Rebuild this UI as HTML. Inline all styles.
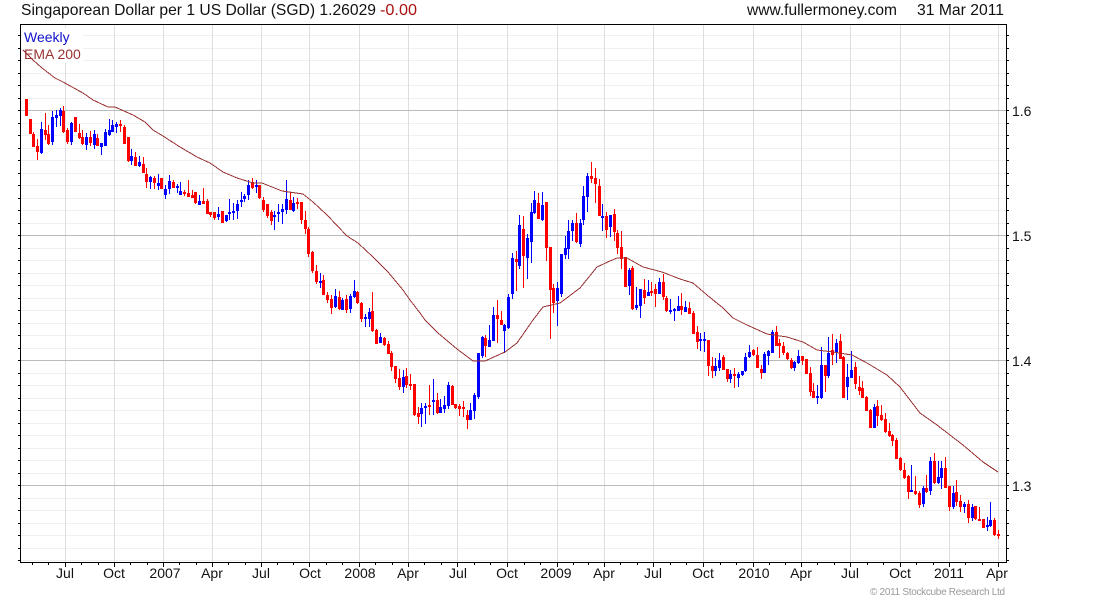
<!DOCTYPE html>
<html><head><meta charset="utf-8"><title>SGD chart</title>
<style>
html,body{margin:0;padding:0;background:#fff;width:1100px;height:600px;overflow:hidden}
svg{display:block;font-family:"Liberation Sans",Arial,sans-serif}
</style></head><body>
<svg id="c" xmlns="http://www.w3.org/2000/svg" width="1100" height="600" viewBox="0 0 1100 600">
<g id="grid" shape-rendering="crispEdges"></g>
<rect x="22" y="28" width="61" height="35" fill="#fff"/>
<g id="candles" shape-rendering="crispEdges"></g>
<polyline fill="none" stroke="#993333" stroke-width="1" shape-rendering="crispEdges" points="23,50 33,60 42,68 55,78 63,82 72,87 83,93 93,100 108,107 115,107 133,115 145,122 153,130 163,136 180,147 197,157 210,163 223,172 237,178 253,183 262,183 282,191 303,194 313,202 327,215 347,236 358,243 373,257 388,272 403,290 410,300 420,313 425,320 438,333 457,349 473,361 485,361 505,352 517,343 533,320 543,307 560,303 580,288 597,267 610,261 617,258 627,258 643,267 662,272 680,279 693,283 707,295 723,308 733,318 747,325 767,334 787,337 803,342 817,350 833,352 852,355 867,363 887,375 900,387 920,413 937,425 950,435 963,445 983,462 998,472"/>
<g id="frame" shape-rendering="crispEdges"></g>
<text x="21" y="15" font-size="16" fill="#111" textLength="355" lengthAdjust="spacingAndGlyphs">Singaporean Dollar per 1 US Dollar (SGD) 1.26029</text>
<text x="380" y="15" font-size="16" fill="#aa1111" textLength="37" lengthAdjust="spacingAndGlyphs">-0.00</text>
<text x="747" y="15" font-size="16" fill="#111" textLength="150" lengthAdjust="spacingAndGlyphs">www.fullermoney.com</text>
<text x="917" y="15" font-size="16" fill="#111" textLength="87" lengthAdjust="spacingAndGlyphs">31 Mar 2011</text>
<text x="24" y="42" font-size="14" fill="#1111cc">Weekly</text>
<text x="24" y="59" font-size="14" fill="#993333">EMA 200</text>
<g font-size="14" fill="#111">
<text x="1012" y="116">1.6</text><text x="1012" y="241">1.5</text><text x="1012" y="366">1.4</text><text x="1012" y="491">1.3</text>
</g>
<g font-size="14" fill="#111" text-anchor="middle">
<text x="65" y="578">Jul</text><text x="114" y="578">Oct</text><text x="165" y="578">2007</text><text x="212" y="578">Apr</text><text x="261" y="578">Jul</text><text x="310" y="578">Oct</text><text x="360" y="578">2008</text><text x="408" y="578">Apr</text><text x="458" y="578">Jul</text><text x="507" y="578">Oct</text><text x="556" y="578">2009</text><text x="604" y="578">Apr</text><text x="653" y="578">Jul</text><text x="703" y="578">Oct</text><text x="754" y="578">2010</text><text x="801" y="578">Apr</text><text x="850" y="578">Jul</text><text x="900" y="578">Oct</text><text x="949" y="578">2011</text><text x="997" y="578">Apr</text>
</g>
<text x="870" y="595" font-size="10" fill="#999" textLength="135">© 2011 Stockcube Research Ltd</text>
</svg>
<script>
var D="r99,99,116,116 r119,119,134,134 r132,134,147,147 r139,146,152,160 b122,129,153,154 r113,130,135,140 r125,134,144,145 b111,117,142,145 b110,115,118,127 b108,110,116,126 r106,111,132,133 r128,130,142,144 b122,123,142,145 r117,117,132,132 r124,133,138,139 r130,137,144,145 b133,137,145,150 r131,137,143,146 b130,134,145,149 r134,138,146,146 b143,143,147,155 b129,132,146,146 b119,130,135,136 b120,125,132,132 b122,124,127,133 r120,124,126,132 r125,127,144,144 r137,137,161,162 b149,156,161,165 r152,157,166,166 b156,162,166,167 r157,164,173,173 r168,174,182,188 b176,177,182,189 r176,178,183,189 b174,183,186,190 r178,178,189,189 b185,189,195,199 b175,181,189,194 r180,182,188,188 b184,186,188,193 b182,191,195,195 r190,192,194,196 r180,193,197,197 r190,195,198,198 r192,192,203,204 b195,201,205,205 r188,201,204,204 r199,201,214,214 r212,212,215,217 r212,212,218,220 b207,214,217,220 r211,211,223,223 b215,215,221,222 b199,212,214,220 b203,211,213,220 b200,204,211,219 b192,200,202,207 b194,196,199,202 b180,185,195,200 r178,182,188,189 b180,185,187,193 r185,185,198,199 r197,200,210,212 r204,204,216,218 r210,212,221,225 b211,215,217,230 b204,212,214,222 b204,209,212,224 b180,199,210,214 r192,200,210,210 b197,203,211,212 r198,202,204,209 r202,202,220,224 r211,220,229,234 r227,229,254,257 r251,252,271,273 r265,271,282,284 b273,281,283,288 r275,280,295,295 r292,295,300,303 r295,299,308,314 b289,296,307,308 r291,297,309,310 b298,300,310,310 r295,299,310,313 b294,296,309,313 b280,291,297,298 r291,292,303,304 r302,303,319,322 b314,317,319,327 b308,312,319,327 r292,311,331,332 r329,330,344,344 b333,337,343,343 r337,338,345,346 r341,344,354,354 r351,353,367,371 r366,366,379,383 r369,378,387,390 b370,377,387,393 r368,376,385,388 r374,384,386,390 r384,384,415,416 r407,413,417,424 b403,408,414,427 b403,406,408,424 r385,405,407,415 b379,400,402,415 r393,400,413,414 b399,407,413,413 b396,405,409,413 b382,385,406,409 r385,386,405,405 r404,404,408,409 r404,406,409,416 r401,407,408,417 r410,415,420,429 b403,410,420,420 b393,395,411,419 b353,353,397,399 b336,337,356,358 r335,338,346,357 b325,340,347,347 b307,315,341,341 r300,315,319,343 r311,320,325,325 b324,325,331,353 b294,297,328,329 b253,258,294,299 r251,259,262,291 b215,225,266,269 r216,229,256,288 b234,238,258,279 b203,212,242,263 b191,200,213,214 r193,203,219,219 b192,205,220,221 r202,202,248,261 r247,247,290,339 r284,288,303,313 b282,288,301,326 b254,254,294,297 b236,248,255,259 b220,231,249,259 b220,223,231,241 r213,223,242,243 b219,223,244,247 b186,196,220,225 b173,176,197,212 r162,176,179,183 r168,178,184,203 r179,186,216,216 b204,216,218,231 r212,216,230,238 b215,215,227,237 r209,214,232,241 r230,233,248,254 r231,247,259,269 r257,257,287,287 b268,270,286,295 r266,268,309,310 b287,305,308,310 b289,289,306,318 r279,290,298,304 b280,292,296,296 r282,291,293,296 r284,289,294,307 b278,282,294,294 r274,282,297,300 r296,298,311,312 b299,310,312,314 b308,309,311,321 b296,306,311,311 r293,306,310,315 b301,307,312,312 r302,308,314,314 r311,313,334,334 r326,332,342,349 b333,339,341,351 b332,339,341,352 r340,340,366,376 r357,366,371,378 b358,366,371,376 b353,360,368,371 r355,357,370,370 r369,369,379,382 b370,374,379,383 r368,374,376,388 b372,374,378,387 b371,371,375,376 b353,357,371,372 b345,352,357,358 r349,350,355,356 r347,355,368,368 r365,369,373,379 b352,354,373,373 b350,351,356,365 b330,332,353,353 r326,332,346,346 r339,343,346,358 r342,346,353,355 r352,353,359,360 r358,360,368,369 b361,362,368,371 b350,356,363,364 r356,356,361,365 r359,359,374,374 r367,373,392,396 r383,391,398,398 b385,396,398,404 b347,365,398,399 r365,365,376,392 b337,353,376,378 r334,350,355,365 b339,343,353,363 r334,341,359,359 r356,357,398,398 b364,377,387,400 b351,370,378,378 r362,367,384,389 r376,387,391,395 r381,388,398,398 r396,397,411,411 r409,410,428,428 b404,407,428,428 r400,406,416,426 r405,415,420,421 r413,419,432,433 r423,431,436,437 r434,435,441,446 r438,440,459,459 r457,458,470,471 r463,470,478,479 r475,476,492,499 b465,490,492,492 r476,491,494,495 r491,493,505,508 b486,488,504,507 r475,488,492,493 b457,461,491,495 r453,461,483,484 b461,477,483,484 b461,468,478,489 r457,468,488,488 r486,486,507,511 b486,493,507,509 r480,492,502,506 r495,501,507,512 b502,504,507,513 r500,504,518,523 b504,507,518,521 r506,506,519,520 r507,519,521,521 r519,519,528,528 b517,525,527,531 b502,520,526,527 r518,520,535,536 r530,534,536,539".split(" ");
var NS="http://www.w3.org/2000/svg";
function R(g,x,y,w,h,f){var r=document.createElementNS(NS,"rect");r.setAttribute("x",x);r.setAttribute("y",y);r.setAttribute("width",w);r.setAttribute("height",h);r.setAttribute("fill",f);g.appendChild(r);}
var G=document.getElementById("grid"),F=document.getElementById("frame"),C=document.getElementById("candles");
var i,y,k;
for(k=-6;k<=36;k++){
  y=Math.round(110+k*12.5);
  if(y<25||y>=563)continue;
  var isMaj=(y===110||y===235||y===360||y===485);
  if(!isMaj)R(G,21,y,985,1,"#f0f0f0");
  R(F,18,y,2,1,"#000");R(F,1007,y,2,1,"#000");
}
var V=[65,114,163,212,261,309,359,408,457,507,557,604,653,703,753,801,850,900,949,998];
V.forEach(function(x){R(G,x,25,1,538,"#dedede");R(F,x,563,1,4,"#000");});
[110,235,360,485].forEach(function(y){R(G,21,y,985,1,"#bbbbbb");});
for(i=0;i<V.length;i++){
  var a=i==0?16:V[i-1],b=V[i];
  if(i==0){R(F,32,563,1,2,"#000");R(F,48,563,1,2,"#000");continue;}
  R(F,Math.round(a+(b-a)/3),563,1,2,"#000");R(F,Math.round(a+2*(b-a)/3),563,1,2,"#000");
}
R(F,20,24,987,1,"#000");R(F,20,562,987,1,"#000");R(F,20,24,1,539,"#000");R(F,1006,24,1,539,"#000");
D.forEach(function(s,i){
  var col=s.charAt(0)=="r"?"#ff0000":"#0000ff",p=s.slice(1).split(",").map(Number),x=Math.floor(26.3+3.768*i);
  R(C,x,p[0],1,p[3]-p[0],col);
  R(C,x-1,p[1],3,Math.max(p[2]-p[1],2),col);
});
</script>
</body></html>
